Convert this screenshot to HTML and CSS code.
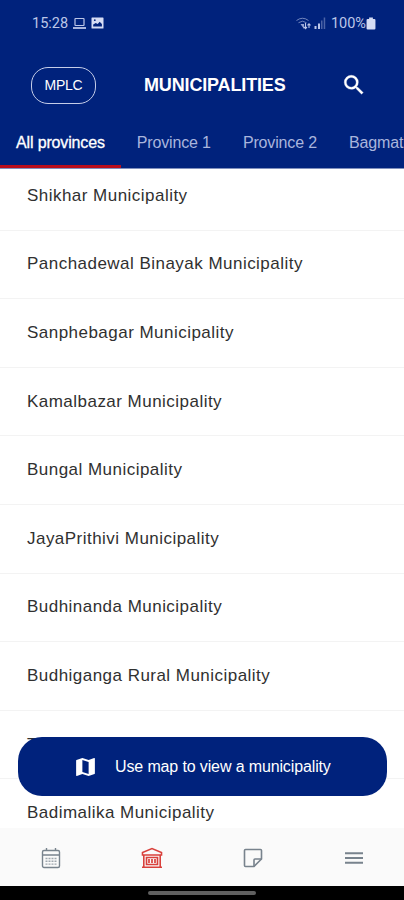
FILE: index.html
```html
<!DOCTYPE html>
<html lang="en">
<head>
    <meta charset="UTF-8">
    <meta name="viewport" content="width=device-width, initial-scale=1.0">
    <title>Municipalities</title>
    <link rel="stylesheet" href="styles.css">
</head>
<body>
    <div class="app">
        <header class="header">
            <div class="status-bar">
                <span class="time">15:28</span>
                <svg class="status-laptop" width="15" height="13" viewBox="0 0 15 13" fill="none" stroke="currentColor">
                    <rect x="3" y="1.5" width="9" height="7" rx="0.5" stroke-width="1.2"/>
                    <path d="M1 11h13" stroke-width="1.8"/>
                </svg>
                <svg class="status-image" width="13" height="12" viewBox="0 0 13 12">
                    <rect x="0.5" y="0.5" width="12" height="11" rx="0.6" fill="#d5dcf4"/>
                    <path d="M2.2 9.5V7.5l2.5-1.6 2 1.1 2-2.3 2.2 2.3v2.5z" fill="#00227c"/>
                    <circle cx="3.8" cy="3.2" r="0.9" fill="#00227c"/>
                </svg>
                <div class="status-right">
                    <svg width="16" height="13" viewBox="0 0 16 13" fill="none" stroke="currentColor">
                        <path d="M0.5 3.5q6-4.500 12 0M2.500 5.700q4-3 8 0" stroke-width="1" opacity="0.6"/>
                        <path d="M4.500 7l3.500 5V7z" fill="currentColor" stroke="none" opacity="0.8"/>
                        <path d="M9.500 6v5.500M8 10l1.500 1.600L11 10M13 11V6.500M11.500 8.300L13 6.700l1.500 1.600" stroke-width="1.1"/>
                    </svg>
                    <svg class="signal" width="12" height="12" viewBox="0 0 12 12" fill="currentColor">
                        <path d="M0.5 9h2v3h-2zM4 6.5h2V12H4z"/>
                        <path d="M7 3.5h1.5V12H7zM9.7 0.5h1.5V12H9.7z" opacity="0.4"/>
                    </svg>
                    <span class="percent">100%</span>
                    <svg class="battery" width="10" height="13" viewBox="0 0 9 13" preserveAspectRatio="none" fill="#d5dcf4">
                        <path d="M2.8 0.5h3.4V2H7.5q1 0 1 1v8.5q0 1-1 1h-6q-1 0-1-1V3q0-1 1-1h1.3z"/>
                    </svg>
                </div>
            </div>
            <div class="title-bar">
                <button class="mplc">MPLC</button>
                <h1>MUNICIPALITIES</h1>
                <button class="search">
                    <svg width="26" height="26" viewBox="0 0 24 24" fill="currentColor" stroke="currentColor" stroke-width="0.3">
                        <path d="M15.5 14h-.79l-.28-.27A6.47 6.47 0 0 0 16 9.5 6.5 6.5 0 1 0 9.5 16c1.61 0 3.09-.59 4.23-1.57l.27.28v.79l5 4.99L20.49 19l-4.99-5zm-6 0C7.01 14 5 11.99 5 9.5S7.01 5 9.5 5 14 7.01 14 9.5 11.99 14 9.5 14z"/>
                    </svg>
                </button>
            </div>
            <nav class="tabs">
                <a class="tab active">All provinces</a>
                <a class="tab">Province 1</a>
                <a class="tab">Province 2</a>
                <a class="tab">Bagmati</a>
            </nav>
        </header>

        <main class="content">
            <ul class="list">
                <li><span>Shikhar Municipality</span></li>
                <li><span>Panchadewal Binayak Municipality</span></li>
                <li><span>Sanphebagar Municipality</span></li>
                <li><span>Kamalbazar Municipality</span></li>
                <li><span>Bungal Municipality</span></li>
                <li><span>JayaPrithivi Municipality</span></li>
                <li><span>Budhinanda Municipality</span></li>
                <li><span>Budhiganga Rural Municipality</span></li>
                <li><span>Triveni Municipality</span></li>
                <li><span>Badimalika Municipality</span></li>
            </ul>
            <button class="map-button">
                <svg width="25" height="24" viewBox="0 0 24 24" preserveAspectRatio="none" fill="currentColor">
                    <path d="M20.5 3l-.16.03L15 5.1 9 3 3.36 4.9c-.21.07-.36.25-.36.48V20.5c0 .28.22.5.5.5l.16-.03L9 18.9l6 2.1 5.64-1.9c.21-.07.36-.25.36-.48V3.5c0-.28-.22-.5-.5-.5zM15 19l-6-2.11V5l6 2.11V19z"/>
                </svg>
                <span>Use map to view a municipality</span>
            </button>
        </main>

        <nav class="bottom-nav">
            <a class="nav-item">
                <svg width="20" height="22" viewBox="0 0 20 22" fill="none" stroke="currentColor" stroke-width="1.4">
                    <rect x="1.5" y="3.5" width="17" height="17" rx="1.5"/>
                    <path d="M1.5 8h17M5.5 1v3M14.5 1v3"/>
                    <path d="M4.5 11.5h11M4.5 14.3h11M4.5 17.1h11" stroke-width="1.4" stroke-dasharray="2 1" opacity="0.7"/>
                </svg>
            </a>
            <a class="nav-item active">
                <svg width="22" height="22" viewBox="0 0 22 22" fill="none" stroke="currentColor" stroke-width="1.6">
                    <path d="M1.5 8V5.500L11 1.500l9.500 4V8z"/>
                    <path d="M2.800 8v12M19.200 8v12M1 20.200h20M5.500 17.500v-7h11v7z"/>
                    <path d="M8 12v4M11 12v4M14 12v4" stroke-width="1.700"/>
                </svg>
            </a>
            <a class="nav-item">
                <svg width="20" height="20" viewBox="0 0 20 20" fill="none" stroke="currentColor" stroke-width="1.600">
                    <path d="M2.500 1.500h15q1 0 1 1V11l-7.500 7.500H2.500q-1 0-1-1v-15q0-1 1-1z"/>
                    <path d="M11 18.500V12q0-1 1-1h6.500"/>
                </svg>
            </a>
            <a class="nav-item">
                <svg width="20" height="14" viewBox="0 0 20 14" fill="none" stroke="currentColor" stroke-width="1.900">
                    <path d="M1 2.300h18M1 7h18M1 11.700h18"/>
                </svg>
            </a>
        </nav>
        <div class="system-bar"><div class="handle"></div></div>
    </div>
</body>
</html>
```
FILE: styles.css
```css
:root {
    --primary-color: #00227c;
    --accent-color: #b90d1c;
    --muted-color: #a9b5dd;
}

* {
    margin: 0;
    padding: 0;
    box-sizing: border-box;
    font-family: 'Liberation Sans', Arial, sans-serif;
}

body {
    background-color: white;
}

button {
    border: none;
    background: none;
    color: white;
}

svg {
    display: block;
    flex-shrink: 0;
}

.app {
    display: flex;
    flex-direction: column;
    width: 404px;
    height: 900px;
    overflow: hidden;
}

.header {
    height: 169px;
    flex-shrink: 0;
    border-bottom: 1px solid #8090bd;
    background-color: var(--primary-color);
    color: white;
}

.status-bar {
    display: flex;
    align-items: center;
    height: 46px;
    padding: 0 28px 0 32px;
    color: #bcc6e8;
}

.status-bar span {
    font-family: Roboto, sans-serif;
    font-size: 14.5px;
}

.status-laptop {
    margin-left: 4px;
}

.status-image {
    margin-left: 4px;
}

.status-right {
    display: flex;
    align-items: center;
    margin-left: auto;
}

.signal {
    margin: 0 5px 0 2px;
}

.title-bar {
    display: flex;
    align-items: center;
    height: 78px;
    padding: 0 37px 0 31px;
}

.mplc {
    width: 65px;
    height: 37px;
    border: 1px solid #c5cde8;
    border-radius: 17px;
    font-size: 14px;
    letter-spacing: -0.2px;
}

.title-bar h1 {
    margin-left: 48px;
    font-size: 18px;
    letter-spacing: -0.15px;
}

.search {
    margin-left: auto;
}

.tabs {
    display: flex;
    height: 44px;
    overflow: hidden;
}

.tab {
    flex-shrink: 0;
    padding: 10px 16px 0;
    border-bottom: 3px solid transparent;
    font-size: 16px;
    letter-spacing: -0.15px;
    white-space: nowrap;
    color: var(--muted-color);
}

.tab.active {
    border-color: var(--accent-color);
    color: white;
    -webkit-text-stroke: 0.3px white;
}

.content {
    position: relative;
    flex: 1;
    overflow: hidden;
}

.list {
    margin-top: -7px;
    list-style: none;
}

.list li {
    display: flex;
    align-items: center;
    height: 68.6px;
    padding: 0 27px;
    border-bottom: 1px solid #f3f3f3;
    font-size: 17px;
    letter-spacing: 0.47px;
    color: #303030;
}

.map-button {
    position: absolute;
    left: 18px;
    right: 17px;
    bottom: 32px;
    display: flex;
    align-items: center;
    height: 59px;
    padding-left: 55px;
    border-radius: 24px;
    background-color: var(--primary-color);
    font-size: 16px;
    letter-spacing: -0.13px;
}

.map-button span {
    margin-left: 17px;
}

.bottom-nav {
    display: grid;
    grid-template-columns: repeat(4, 1fr);
    height: 58px;
    padding-top: 2px;
    flex-shrink: 0;
    background-color: #fafafa;
}

.nav-item {
    display: flex;
    justify-content: center;
    align-items: center;
    color: #78838d;
}

.nav-item.active {
    color: #d9413c;
}

.system-bar {
    display: flex;
    justify-content: center;
    height: 14px;
    padding-top: 5px;
    flex-shrink: 0;
    background-color: black;
}

.handle {
    width: 108px;
    height: 4px;
    border-radius: 2px;
    background-color: #606060;
}
```
